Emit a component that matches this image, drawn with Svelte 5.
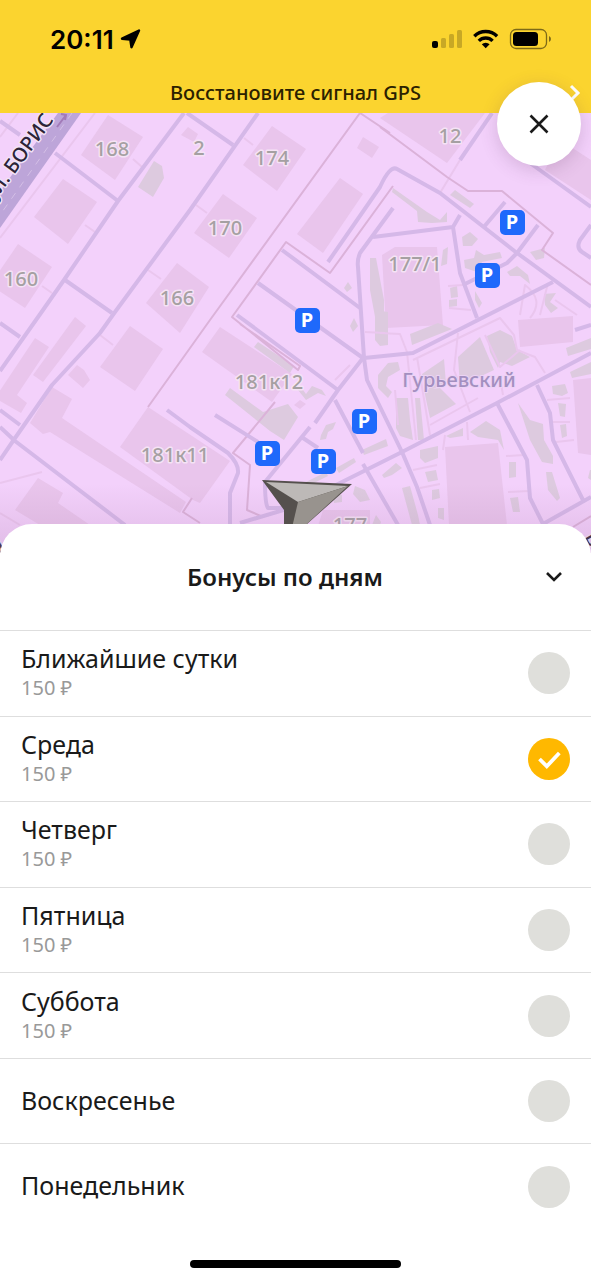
<script>
	let days = $state([
		{ name: 'Ближайшие сутки', bonus: '150 ₽', checked: false },
		{ name: 'Среда', bonus: '150 ₽', checked: true },
		{ name: 'Четверг', bonus: '150 ₽', checked: false },
		{ name: 'Пятница', bonus: '150 ₽', checked: false },
		{ name: 'Суббота', bonus: '150 ₽', checked: false },
		{ name: 'Воскресенье', bonus: '', checked: false },
		{ name: 'Понедельник', bonus: '', checked: false }
	])

	const buildings = [
		'108,115 143,137 115,180 81,155',
		'63,179 97,202 68,244 34,217',
		'18,244 52,267 25,308 -10,285',
		'177,263 209,287 180,333 146,303',
		'272,126 306,149 277,191 243,165',
		'223,194 257,218 229,258 194,233',
		'363,137 379,147 372,158 357,148',
		'188,127 198,134 194,142 181,135',
		'340,178 363,194 323,253 297,234',
		'388,113 485,113 447,163 380,118',
		'560,140 591,160 591,200 545,170',
		'130,326 163,349 135,391 100,367',
		'75,317 86,326 43,382 33,375',
		'35,338 49,347 17,395 27,403 21,413 -5,398',
		'77,365 84,370 90,380 83,388 68,375',
		'52,387 72,399 62,418 186,502 180,513 50,432 43,434 30,423',
		'148,407 230,461 200,503 193,500 120,447',
		'38,478 63,493 58,503 90,525 40,525 15,510',
		'220,327 292,374 272,402 202,352',
		'382,255 395,247 437,247 443,325 386,328',
		'518,320 573,316 573,342 520,347',
		'445,447 498,443 507,525 449,525',
		'573,380 591,378 591,455 578,453',
		'323,510 370,510 370,526 318,526',
		'300,400 306,404 300,409 294,405'
	]

	const greens = [
		'154,161 162,166 164,178 153,197 138,187',
		'393,188 427,212 440,220 447,212 447,222 432,223 418,222 417,211 392,192',
		'455,190 474,204 470,208 450,195',
		'370,258 376,258 384,300 384,322 376,322 370,290',
		'462,237 470,232 478,239 472,246 463,246',
		'476,250 484,255 500,252 502,258 482,262 477,272 465,268 464,260 474,258',
		'507,272 517,266 528,275 530,284 520,276 510,276',
		'544,294 556,293 550,302 558,308 551,313 545,305',
		'530,252 545,248 544,258 536,260',
		'443,250 448,247 447,264 441,266',
		'475,291 482,303 479,308 475,300',
		'450,288 457,286 458,297 451,298',
		'449,300 457,299 457,306 449,307',
		'348,282 352,288 347,292 344,288',
		'354,318 358,326 353,332 350,326',
		'258,342 294,366 290,373 254,347',
		'230,388 263,412 288,404 298,417 284,440 270,431 225,395',
		'298,390 306,400 318,393 326,396 322,390 312,386 306,394 300,386',
		'321,435 326,425 336,422 333,429 328,432 326,439 320,440',
		'375,310 388,312 388,345 380,346 375,340',
		'378,375 388,363 398,362 400,370 388,377 386,386 392,392 388,398 378,388',
		'410,334 438,323 452,329 412,345',
		'422,374 444,359 446,384 430,390 425,383',
		'424,390 440,388 456,404 430,418',
		'458,357 480,337 494,370 460,386',
		'487,336 500,330 512,336 517,350 530,357 512,366 500,362 498,368 490,352',
		'566,348 591,338 591,349 568,356',
		'570,372 591,362 591,374 572,378',
		'396,398 408,398 410,420 413,440 400,436 396,428',
		'415,398 420,398 424,440 418,440',
		'420,450 438,446 438,458 425,463 420,458',
		'425,472 436,470 438,480 428,482',
		'432,490 439,489 440,498 432,500',
		'438,508 444,508 444,520 438,518',
		'470,432 486,421 500,430 504,450 498,440 478,437',
		'446,436 463,428 463,436 450,438',
		'518,403 530,420 543,424 544,440 553,456 553,464 542,462 530,440',
		'546,472 552,472 560,498 557,501 548,490',
		'552,386 565,384 568,393 562,396 553,394',
		'558,403 566,404 565,417 560,416',
		'560,425 566,424 567,436 562,438',
		'509,462 516,462 516,477 509,478',
		'510,498 518,497 520,512 513,512',
		'336,468 354,458 356,462 339,473',
		'362,450 386,439 388,446 364,455',
		'302,484 326,472 328,476 308,486',
		'355,486 365,490 370,500 360,502 353,494',
		'382,475 396,463 402,468 392,475 384,478',
		'402,488 410,486 418,515 420,525 412,525',
		'332,492 342,495 342,502 334,503',
		'376,515 381,522 380,525 372,525',
		'590,470 591,470 591,480 588,478'
	]

	const roads = [
		'M0 121 20 135M55 153 118 201M184 113 118 201 64 280 43 310 0 371M0 323 20 337M65 280 112 313',
		'M258 113 190 210 115 312 100 333 52 385 13 441 0 460M187 113 233 145M0 410 20 425M0 427 15 441 125 525',
		'M167 410 190 427 228 453Q239 464 238 473L230 493V525M215 415 258 442',
		'M310 427 265 482Q265 504 268 508L290 508M303 438 318 448M240 523 290 508 402 452 497 403 591 353',
		'M363 358 338 390 315 423M237 315 338 390M258 283 363 358M282 250 360 308',
		'M328 262 380 187Q390 165 397 169L440 193 517 253 591 307',
		'M393 208 360 253Q357 260 358 267L364 358 367 380 402 452 417 487 430 525',
		'M373 237 453 227 460 215M453 227 460 273 477 318M364 358 413 353 553 282',
		'M483 228 505 202M538 225 517 253 507 263 463 285M492 113 460 160',
		'M530 163 591 207M591 225 580 240Q576 248 582 252L591 258',
		'M497 403 527 460 530 498 543 524 591 497M537 385 550 413 553 440 583 500',
		'M363 464 398 525M335 400 363 453M575 330 591 325'
	]

	const paths = [
		'M0 137 18 113M0 238 95 113M0 483 42 472M85 225 95 232M42 286 52 293M148 270 161 279M100 335 113 345M244 138 253 145M196 205 207 213M133 159 142 167M0 513 20 525',
		'M440 193 460 160M448 286 463 285M449 308 471 310M380 333 400 334 407 352 416 440',
		'M417 357 430 435M458 333 454 370 470 412M413 360 440 347 500 318 514 335 517 350 535 357 545 373',
		'M485 335 500 367 520 350M430 425 478 398M395 390 398 425M413 470 437 465M420 488 440 484M445 435 443 450M467 422 468 440M506 456 524 455M508 492 529 491M547 400 570 398M553 422 570 422M556 442 574 440M500 378 503 395',
		'M520 315 525 285Q545 300 530 318M540 315 548 283M555 300 577 315M365 332 385 333M335 380 350 365'
	]

	const borders = [
		'M390 133 360 113 210 320 148 407',
		'M380 127 447 177 468 191H502L553 233 542 250 591 285',
		'M393 186 330 273 286 242 232 317 298 370 300 366 240 324',
		'M275 402 233 453 250 465 247 510 263 517M200 523 183 512 192 498M573 527 591 516'
	]

	const labels = [
		['168', 112, 156], ['2', 199, 155], ['174', 272, 165], ['12', 450, 143],
		['170', 225, 235], ['160', 21, 286], ['166', 177, 305], ['177/1', 415, 271],
		['181к12', 269, 389], ['181к11', 175, 462], ['177', 350, 532]
	]

	const parkings = [
		[512, 222], [487, 275], [307, 320], [364, 421], [267, 453], [323, 461]
	]
</script>

<main>
	<header>
		<div class="status">
			<div class="clock">
				<span>20:11</span>
				<svg width="21" height="20" viewBox="0 0 21 20">
					<path d="M19 1.5 11.5 18.2 10.3 10.6 2 9.7Z" stroke="#000" stroke-width="2.4" stroke-linejoin="round" />
				</svg>
			</div>
			<svg width="120" height="22" viewBox="431 28 120 22">
				<rect x="432" y="41" width="6" height="7" rx="2" />
				<g opacity=".2">
					<rect x="441" y="38" width="5" height="10" rx="1.5" />
					<rect x="449" y="34" width="5" height="14" rx="1.5" />
					<rect x="457" y="30" width="5" height="18" rx="1.5" />
				</g>
				<g fill="none" stroke="#000" stroke-width="3.4">
					<path d="M474.3 36.2a16.3 16.3 0 0 1 22.8 0" />
					<path d="M478.8 40.9a9.8 9.8 0 0 1 13.8 0" />
				</g>
				<path d="M485.7 48.2 481.8 44.3a5.6 5.6 0 0 1 7.8 0Z" />
				<rect x="510.5" y="29.5" width="36" height="19" rx="5.5" fill="none" stroke="#000" stroke-opacity=".5" stroke-width="1.3" />
				<rect x="513" y="32" width="25" height="14" rx="3.5" />
				<path d="M549 36q2 1 2 3t-2 3Z" opacity=".5" />
			</svg>
		</div>
		<a class="notice" href="#gps">
			<span>Восстановите сигнал GPS</span>
			<svg width="12" height="18" viewBox="0 0 12 18">
				<path d="M2 2l7 7-7 7" fill="none" stroke="#fff" stroke-width="3" />
			</svg>
		</a>
		<button class="close" aria-label="Закрыть">
			<svg width="20" height="20" viewBox="0 0 20 20">
				<path d="M1.5 1.5l17 17M18.5 1.5l-17 17" stroke="#1a1a1a" stroke-width="2.6" />
			</svg>
		</button>
	</header>

	<svg class="map" viewBox="0 113 591 440" preserveAspectRatio="xMidYMin slice">
		<defs>
			<linearGradient id="fade" x1="0" y1="0" x2="0" y2="1">
				<stop offset="0" stop-color="#a878a8" stop-opacity="0" />
				<stop offset="1" stop-color="#a878a8" stop-opacity=".25" />
			</linearGradient>
		</defs>
		<rect y="113" width="591" height="440" fill="#f3d1fb" />
		{#each buildings as points}
			<polygon {points} fill="#e9c5ec" />
		{/each}
		{#each greens as points}
			<polygon {points} fill="#ddcadf" />
		{/each}
		<g fill="none" stroke-linejoin="round">
			{#each paths as d}
				<path {d} stroke="#eac6ee" stroke-width="2" />
			{/each}
			{#each borders as d}
				<path {d} stroke="#dbb2d9" stroke-width="2" />
			{/each}
			{#each roads as d}
				<path {d} stroke="#d5b8e8" stroke-width="4" />
			{/each}
		</g>
		<polygon points="58,113 81,113 0,228 0,191" fill="#bda5d9" />
		<path d="M72 113 0 215" stroke="#d4bfe6" stroke-dasharray="7 7" />
		<path d="M57 127 66 115M61 114l5 1-1 5" fill="none" stroke="#a27bb8" stroke-width="2" />
		<text class="street" transform="translate(-5 201) rotate(-54)">ул. БОРИС</text>
		<text class="street" transform="translate(0 554) rotate(-54)">У</text>
		<text class="street" transform="translate(584 537) rotate(60)">В</text>

		{#each labels as [text, x, y]}
			<text class="house" {x} {y}>{text}</text>
		{/each}
		<text class="district" x="459" y="387">Гурьевский</text>

		{#each parkings as [x, y]}
			<rect x={x - 12} y={y - 12} width="25" height="25" rx="5" fill="#1f69fb" />
			<text class="parking" {x} y={y + 7}>P</text>
		{/each}

		<rect y="484" width="591" height="69" fill="url(#fade)" />
		<polygon points="262,480 352,484 298,532 284,532 284,510" fill="#55504d" />
		<polygon points="266,482 348,486 298,502" fill="#bdb9b7" />
		<polygon points="348,486 298,502 291,532 298,532" fill="#98938e" />
	</svg>

	<section class="sheet">
		<div class="title">
			<h1>Бонусы по дням</h1>
			<button aria-label="Свернуть">
				<svg width="18" height="12" viewBox="0 0 18 12">
					<path d="M2 2l7 7 7-7" fill="none" stroke="#1a1a1a" stroke-width="2.6" />
				</svg>
			</button>
		</div>
		<div class="days">
			{#each days as day}
				<label>
					<span class="text">
						<span class="name">{day.name}</span>
						{#if day.bonus}
							<span class="bonus">{day.bonus}</span>
						{/if}
					</span>
					<span class="tick">
						<input type="checkbox" bind:checked={day.checked}>
						{#if day.checked}
							<svg width="42" height="42" viewBox="0 0 42 42">
								<path d="M11.5 21l7.3 7.3 12.5-13.3" fill="none" stroke="#fff" stroke-width="3.8" />
							</svg>
						{/if}
					</span>
				</label>
			{/each}
		</div>
		<footer><span></span></footer>
	</section>
</main>

<style>
	:global(body){
		margin: 0;
		background: #fff;
	}
	main{
		display: flex;
		flex-direction: column;
		min-height: 100vh;
		font-family: "Noto Sans", sans-serif;
		color: #1a1a1a;
	}
	button{
		display: grid;
		place-items: center;
		padding: 0;
		border: none;
		background: none;
		cursor: pointer;
	}
	header{
		position: relative;
		height: 113px;
		background: #fbd42f;
	}
	.status{
		display: flex;
		align-items: center;
		justify-content: space-between;
		height: 78px;
		padding: 0 40px 0 50px;
	}
	.clock{
		display: flex;
		align-items: center;
		gap: 6px;
		font: 600 26px Inter, sans-serif;
		color: #000;
	}
	.notice{
		display: grid;
		grid-template-columns: 1fr auto 1fr;
		align-items: center;
		height: 30px;
		padding: 0 10px;
		font-size: 20px;
		font-weight: 500;
		line-height: 28px;
		color: #2b2100;
		text-decoration: none;
	}
	.notice span{
		grid-column: 2;
	}
	.notice svg{
		justify-self: end;
	}
	.close{
		position: absolute;
		top: 82px;
		right: 10px;
		width: 84px;
		height: 84px;
		border-radius: 50%;
		background: #fff;
		box-shadow: 0 4px 18px rgba(90, 50, 90, .2);
	}
	.map{
		display: block;
		width: 100%;
		height: 440px;
	}
	text{
		text-anchor: middle;
		paint-order: stroke;
		stroke-linejoin: round;
	}
	.house{
		font-size: 20px;
		font-weight: 500;
		fill: #a5a0a2;
		stroke: #f5e3f5;
		stroke-width: 3px;
	}
	.district{
		font-size: 20px;
		font-weight: 500;
		fill: #a38fc0;
		stroke: #ecd3f5;
		stroke-width: 2px;
	}
	.street{
		font-size: 20px;
		font-weight: 500;
		fill: #2c2438;
		stroke: #f0e2f6;
		stroke-width: 3px;
		text-anchor: start;
	}
	.parking{
		font-size: 20px;
		font-weight: 700;
		fill: #fff;
	}
	.sheet{
		position: relative;
		display: flex;
		flex: 1;
		flex-direction: column;
		margin-top: -29px;
		border-radius: 32px 32px 0 0;
		background: #fff;
	}
	.title{
		display: flex;
		align-items: center;
		height: 106px;
		padding: 0 21px 0 32px;
	}
	h1{
		flex: 1;
		margin: 0;
		padding-bottom: 2px;
		font-size: 24px;
		font-weight: 600;
		text-align: center;
	}
	.title button{
		width: 32px;
		height: 42px;
	}
	.days{
		display: grid;
		flex: 1;
		grid-auto-rows: 1fr;
	}
	label{
		display: flex;
		align-items: center;
		justify-content: space-between;
		padding: 0 21px;
		border-top: 1px solid #dedede;
		cursor: pointer;
	}
	.text{
		display: flex;
		flex-direction: column;
		padding-bottom: 3px;
	}
	.name{
		font-size: 25px;
		line-height: 32px;
	}
	.bonus{
		font-size: 20px;
		line-height: 27px;
		color: #999;
	}
	.tick{
		display: grid;
	}
	.tick > *{
		grid-area: 1 / 1;
	}
	.tick svg{
		pointer-events: none;
	}
	input{
		width: 42px;
		height: 42px;
		margin: 0;
		appearance: none;
		border-radius: 50%;
		background: #dfdfdb;
		cursor: pointer;
	}
	input:checked{
		background: #ffb800;
	}
	footer{
		display: grid;
		place-items: end center;
		height: 39px;
		padding-bottom: 12px;
	}
	footer span{
		width: 211px;
		height: 8px;
		border-radius: 4px;
		background: #000;
	}
</style>
